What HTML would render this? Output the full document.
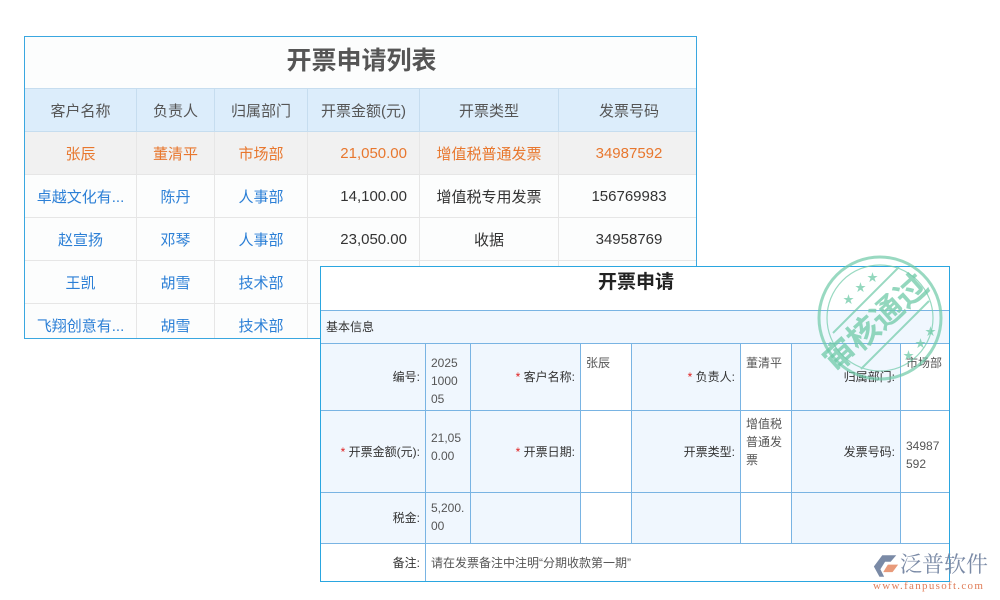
<!DOCTYPE html>
<html><head><meta charset="utf-8"><style>
*{margin:0;padding:0;box-sizing:border-box}
body{width:1000px;height:600px;background:#fff;position:relative;overflow:hidden;font-family:"Liberation Sans","Noto Sans CJK SC",sans-serif}
.a{position:absolute;white-space:nowrap}
#list{left:24px;top:36px;width:673px;height:303px;border:1px solid #3aa7e0;background:#fcfdfd;overflow:hidden}
#list table{border-collapse:collapse;position:absolute;left:-1px;top:51px;table-layout:fixed;width:675px}
#list td{height:43px;border:1px solid #e6e6e6;text-align:center;font-size:15px;color:#333}
#list tr.h td{background:#dcedfb;color:#555;border-color:#c6ddef}
#list tr.o td{background:#f1f1f1;color:#e8772e}
.b{color:#2b7fd6!important}
#form{left:320px;top:266px;width:630px;height:316px;border:1px solid #2aa6e0;background:#fff;overflow:hidden}
#form table{border-collapse:collapse;position:absolute;left:-1px;top:43px;table-layout:fixed;width:631px}
#form td{border:1px solid #79b4e3;font-size:12px;color:#333;background:#f0f7fe;padding:0 5px;line-height:18px;white-space:normal}
#form td.l{text-align:right;vertical-align:middle}
#form td.v{vertical-align:top;padding-top:10px;color:#555}
#form td.w{background:#fff}
.r{color:#e02020}
</style></head><body>
<div id="list" class="a">
<div class="a" style="left:0;top:0;width:673px;height:51px;text-align:center;line-height:48px;font-size:25px;font-weight:bold;color:#555">开票申请列表</div>
<table>
<colgroup><col style="width:112px"><col style="width:78px"><col style="width:93px"><col style="width:112px"><col style="width:139px"><col style="width:141px"></colgroup>
<tr class="h"><td>客户名称</td><td>负责人</td><td>归属部门</td><td>开票金额(元)</td><td>开票类型</td><td>发票号码</td></tr>
<tr class="o"><td>张辰</td><td>董清平</td><td>市场部</td><td style="text-align:right;padding-right:12px">21,050.00</td><td>增值税普通发票</td><td>34987592</td></tr>
<tr><td class="b">卓越文化有...</td><td class="b">陈丹</td><td class="b">人事部</td><td style="text-align:right;padding-right:12px">14,100.00</td><td>增值税专用发票</td><td>156769983</td></tr>
<tr><td class="b">赵宣扬</td><td class="b">邓琴</td><td class="b">人事部</td><td style="text-align:right;padding-right:12px">23,050.00</td><td>收据</td><td>34958769</td></tr>
<tr><td class="b">王凯</td><td class="b">胡雪</td><td class="b">技术部</td><td></td><td></td><td></td></tr>
<tr><td class="b">飞翔创意有...</td><td class="b">胡雪</td><td class="b">技术部</td><td></td><td></td><td></td></tr>
</table>
</div>
<div id="form" class="a">
<div class="a" style="left:0;top:0;width:630px;height:43px;text-align:center;line-height:32px;font-size:19px;font-weight:bold;color:#222">开票申请</div>
<table>
<colgroup><col style="width:105px"><col style="width:45px"><col style="width:110px"><col style="width:51px"><col style="width:109px"><col style="width:51px"><col style="width:109px"><col style="width:51px"></colgroup>
<tr><td colspan="8" style="height:33px">基本信息</td></tr>
<tr style="height:67px"><td class="l">编号:</td><td class="v">2025 1000 05</td><td class="l"><span class="r">*</span> 客户名称:</td><td class="v w">张辰</td><td class="l"><span class="r">*</span> 负责人:</td><td class="v w">董清平</td><td class="l">归属部门:</td><td class="v w">市场部</td></tr>
<tr style="height:82px"><td class="l"><span class="r">*</span> 开票金额(元):</td><td class="v" style="padding-top:18px">21,05 0.00</td><td class="l"><span class="r">*</span> 开票日期:</td><td class="w"></td><td class="l">开票类型:</td><td class="v w" style="padding-top:4px">增值税普通发票</td><td class="l">发票号码:</td><td class="v w" style="padding-top:26px">34987 592</td></tr>
<tr style="height:51px"><td class="l">税金:</td><td class="v" style="padding-top:6px">5,200. 00</td><td></td><td class="w"></td><td></td><td class="w"></td><td></td><td class="w"></td></tr>
<tr style="height:39px"><td class="l w">备注:</td><td colspan="7" class="w" style="color:#555">请在发票备注中注明“分期收款第一期”</td></tr>
</table>
</div>
<svg class="a" style="left:815px;top:255px" width="132" height="132" viewBox="0 0 132 132">
<g fill="none" stroke="#6fcaa8" opacity="0.7">
<circle cx="65" cy="63" r="61" stroke-width="3"/>
<circle cx="65" cy="63" r="53" stroke-width="1.2"/>
<line x1="18" y1="78" x2="84" y2="12" stroke-width="2"/>
<line x1="46" y1="114" x2="114" y2="46" stroke-width="2"/>
</g>
<text text-anchor="middle" transform="translate(68 76) rotate(-42)" font-size="32" font-weight="bold" fill="#6fcaa8" opacity="0.75" font-family="Noto Sans CJK SC,sans-serif">审核通过</text>
<g fill="#6fcaa8" opacity="0.75" font-size="11"><text x="28" y="48">★</text><text x="40" y="36">★</text><text x="52" y="26">★</text><text x="88" y="104">★</text><text x="100" y="92">★</text><text x="110" y="80">★</text></g>
</svg>
<svg class="a" style="left:872px;top:553px" width="28" height="26" viewBox="0 0 30 27"><path d="M2 14 L11 2 H26 L20 9 H14 L9 17 L13 25 H8 Z" fill="#7a8aa6"/><path d="M12 20 L17 12 H28 L22 20 Z" fill="#e89a7a"/></svg>
<div class="a" style="left:900px;top:550px;font-size:22px;line-height:28px;color:#7a8aa6;font-family:'Noto Serif CJK SC',serif">泛普软件</div>
<div class="a" style="left:873px;top:580px;font-size:11px;line-height:12px;color:#e07c57;font-family:'Liberation Serif',serif;letter-spacing:1.3px">www.fanpusoft.com</div>
</body></html>
